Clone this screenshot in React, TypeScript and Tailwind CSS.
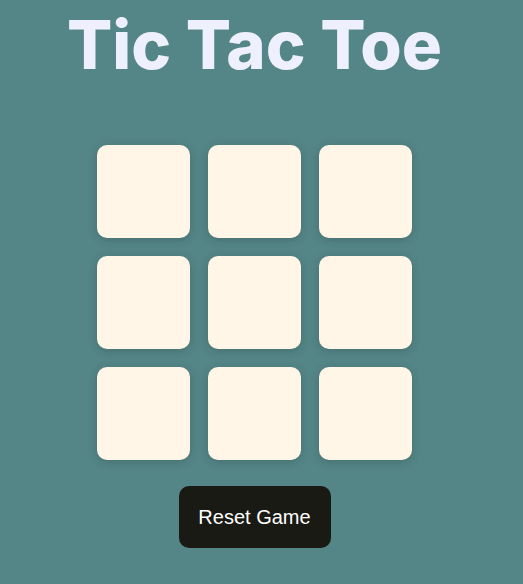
export default function App() {
  const cells = Array.from({ length: 9 });
  return (
    <div className="min-h-[584px] w-full bg-[#548687]">
      <div className="flex w-[509px] flex-col items-center">
        <h1
          className="mt-[6px] text-[67px] font-extrabold leading-[78px] text-[#eef0fd]"
          style={{ fontFamily: "Inter, 'Open Sans', sans-serif" }}
        >
          Tic Tac Toe
        </h1>
        <div className="mt-[61px] grid grid-cols-[93px_93px_93px] grid-rows-[93px_93px_93px] gap-[18px]">
          {cells.map((_, i) => (
            <button
              key={i}
              className="h-[93px] w-[93px] rounded-[10px] bg-[#fff6e7] shadow-[0_2px_10px_rgba(0,0,0,0.18)]"
            />
          ))}
        </div>
        <button
          className="mt-[26px] h-[62px] w-[152px] rounded-[10px] bg-[#1a1a15] text-[20px] text-white"
          style={{ fontFamily: "'Liberation Sans', Arial, sans-serif" }}
        >
          Reset Game
        </button>
      </div>
    </div>
  );
}
